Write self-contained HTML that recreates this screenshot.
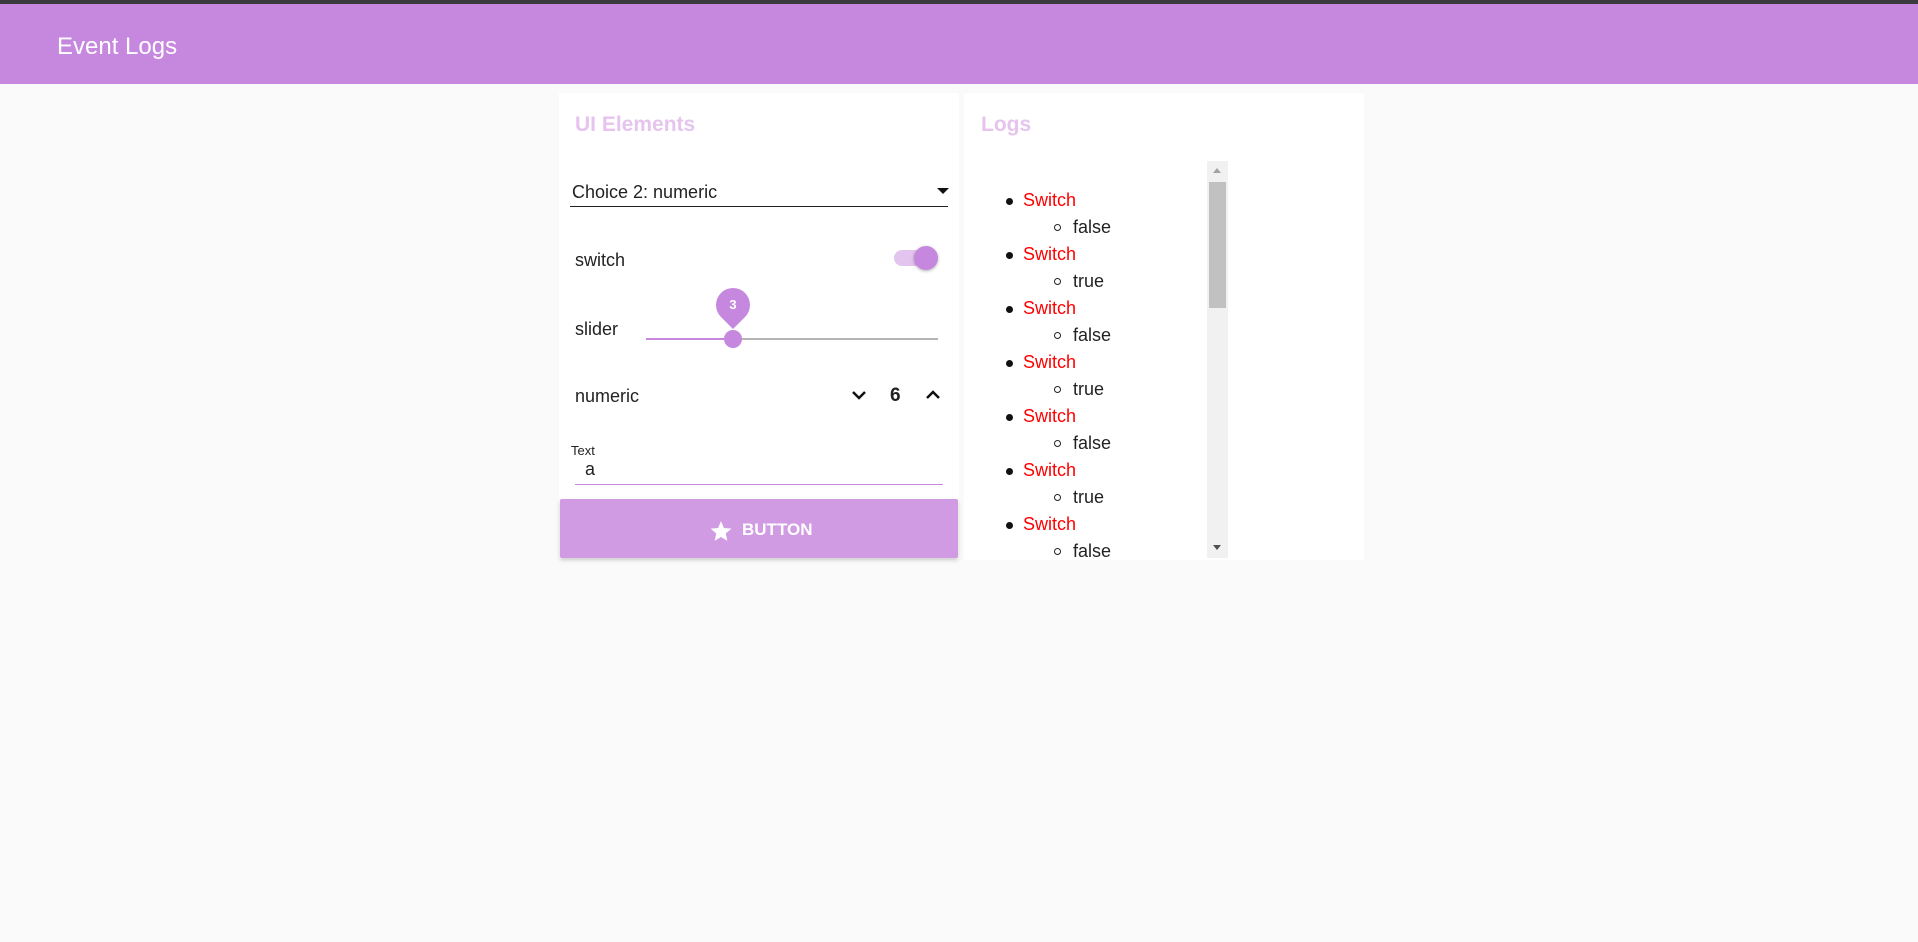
<!DOCTYPE html>
<html><head><meta charset="utf-8"><style>
*{box-sizing:border-box;margin:0;padding:0}
body{width:1918px;height:942px;background:#fafafa;font-family:"Liberation Sans",sans-serif;position:relative;overflow:hidden;color:#222}
.a{position:absolute}
.lg{list-style:none}
.lg li{position:relative;height:27px;line-height:27px}
.lg li.s::before{content:"";position:absolute;left:-17px;top:11px;width:7px;height:7px;border-radius:50%;background:#111}
.lg li.v{padding-left:50px}
.lg li.v::before{content:"";position:absolute;left:31px;top:10px;width:7px;height:7px;border-radius:50%;border:1.5px solid #222;box-sizing:border-box}
</style></head><body>
<div class="a" style="left:0;top:0;width:1918px;height:4px;background:#3a3a3e"></div>
<div class="a" style="left:0;top:4px;width:1918px;height:80px;background:#c687df"></div>
<div class="a" style="left:57px;top:32px;font-size:24px;color:#fff;line-height:30px">Event Logs</div>

<div class="a" style="left:559px;top:93px;width:400px;height:466px;background:#fff"></div>
<div class="a" style="left:575px;top:111px;font-size:21px;font-weight:bold;color:#e6c4ee;line-height:28px">UI Elements</div>
<div class="a" style="left:572px;top:180px;font-size:18px;line-height:24px">Choice 2: numeric</div>
<div class="a" style="left:570px;top:206px;width:378px;height:1px;background:#222"></div>
<div class="a" style="left:937px;top:188px;width:0;height:0;border-left:6px solid transparent;border-right:6px solid transparent;border-top:6px solid #111"></div>

<div class="a" style="left:575px;top:248px;font-size:18px;line-height:24px">switch</div>
<div class="a" style="left:894px;top:250px;width:40px;height:16px;border-radius:8px;background:#e3c4ef"></div>
<div class="a" style="left:914px;top:246px;width:24px;height:24px;border-radius:50%;background:#c687df;box-shadow:0 1px 3px rgba(0,0,0,.3)"></div>

<div class="a" style="left:575px;top:317px;font-size:18px;line-height:24px">slider</div>
<div class="a" style="left:646px;top:338px;width:292px;height:2px;background:#b4b4b4"></div>
<div class="a" style="left:646px;top:338px;width:87px;height:2px;background:#c687df"></div>
<div class="a" style="left:724px;top:330px;width:18px;height:18px;border-radius:50%;background:#c687df"></div>
<div class="a" style="left:716px;top:288px;width:34px;height:34px;border-radius:50% 50% 50% 0;transform:rotate(-45deg);background:#c687df"></div>
<div class="a" style="left:716px;top:296px;width:34px;text-align:center;font-size:13px;font-weight:bold;color:#fff;line-height:17px">3</div>

<div class="a" style="left:575px;top:384px;font-size:18px;line-height:24px">numeric</div>
<svg class="a" style="left:850px;top:388px" width="18" height="14" viewBox="0 0 18 14"><path d="M3 4l6 6 6-6" fill="none" stroke="#111" stroke-width="2.5"/></svg>
<div class="a" style="left:890px;top:384px;font-size:19px;font-weight:bold;line-height:24px">6</div>
<svg class="a" style="left:924px;top:388px" width="18" height="14" viewBox="0 0 18 14"><path d="M3 10l6-6 6 6" fill="none" stroke="#111" stroke-width="2.5"/></svg>

<div class="a" style="left:571px;top:443px;font-size:13px;line-height:16px">Text</div>
<div class="a" style="left:585px;top:458px;font-size:18px;line-height:22px">a</div>
<div class="a" style="left:575px;top:484px;width:368px;height:1px;background:#c687df"></div>

<div class="a" style="left:560px;top:499px;width:398px;height:59px;background:#d09be3;border-radius:2px;box-shadow:0 2px 4px rgba(0,0,0,.2)"></div>
<svg class="a" style="left:708px;top:519px" width="26" height="25" viewBox="0 0 24 24"><path d="M12 17.27L18.18 21l-1.64-7.03L22 9.24l-7.19-.61L12 2 9.19 8.63 2 9.24l5.46 4.73L5.82 21z" fill="#fff"/></svg>
<div class="a" style="left:742px;top:519px;font-size:17px;font-weight:bold;color:#fff;line-height:22px">BUTTON</div>

<div class="a" style="left:964px;top:93px;width:400px;height:467px;background:#fff"></div>
<div class="a" style="left:981px;top:111px;font-size:21px;font-weight:bold;color:#e6c4ee;line-height:28px">Logs</div>
<div class="a" style="left:1207px;top:161px;width:21px;height:397px;background:#f1f1f1"></div>
<div class="a" style="left:1209px;top:182px;width:17px;height:126px;background:#c1c1c1"></div>
<div class="a" style="left:1213px;top:168px;width:0;height:0;border-left:4px solid transparent;border-right:4px solid transparent;border-bottom:5px solid #a3a3a3"></div>
<div class="a" style="left:1213px;top:545px;width:0;height:0;border-left:4px solid transparent;border-right:4px solid transparent;border-top:5px solid #505050"></div>
<div class="a" style="left:964px;top:161px;width:243px;height:397px;overflow:hidden;font-size:18px">
<ul class="lg" style="margin-top:26px;padding-left:59px">
<li class="s" style="color:#f00">Switch</li><li class="v">false</li>
<li class="s" style="color:#f00">Switch</li><li class="v">true</li>
<li class="s" style="color:#f00">Switch</li><li class="v">false</li>
<li class="s" style="color:#f00">Switch</li><li class="v">true</li>
<li class="s" style="color:#f00">Switch</li><li class="v">false</li>
<li class="s" style="color:#f00">Switch</li><li class="v">true</li>
<li class="s" style="color:#f00">Switch</li><li class="v">false</li>
<li class="s" style="color:#f00">Switch</li><li class="v">true</li>
</ul></div>
</body></html>
